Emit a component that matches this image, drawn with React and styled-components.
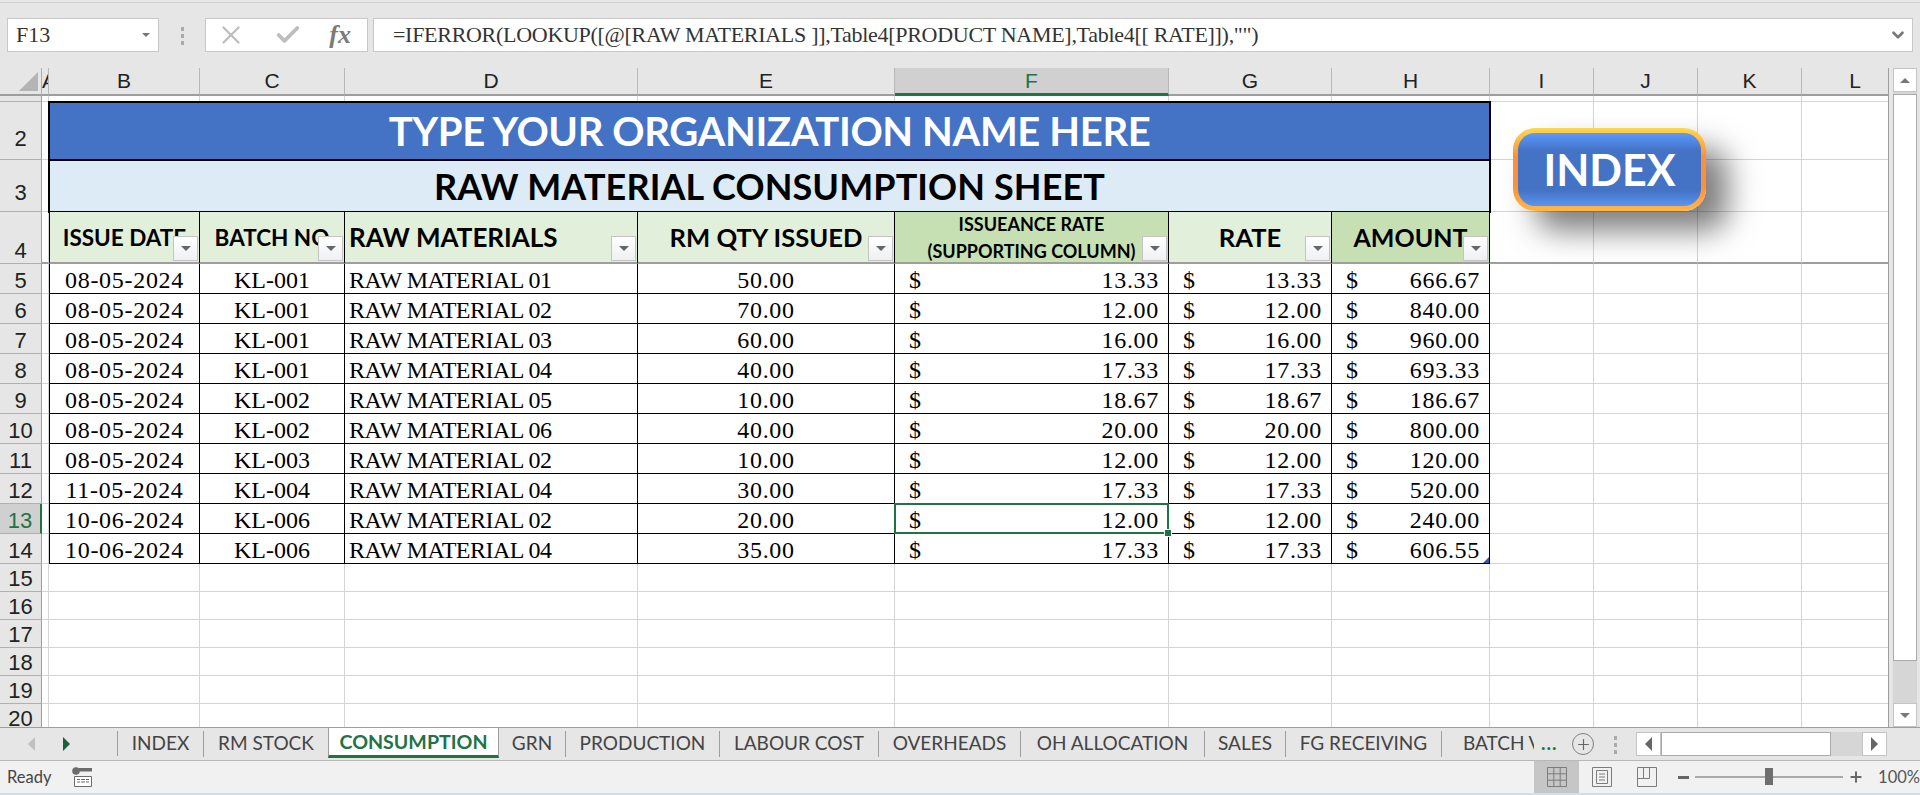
import styled, { createGlobalStyle } from "styled-components";
import { ChevronDown, X, Check, Plus } from "lucide-react";

const calibri = `Lato, "Open Sans", sans-serif`;
const cambria = `"Liberation Serif", serif`;
const arial = `"Liberation Sans", Arial, sans-serif`;

const GRID = "#d4d4d4";
const GREEN = "#217346";

const columns = ["B", "C", "D", "E", "F", "G", "H"];
const emptyColumns = ["I", "J", "K", "L"];

const records = [
  ["08-05-2024", "KL-001", "RAW MATERIAL 01", "50.00", "13.33", "13.33", "666.67"],
  ["08-05-2024", "KL-001", "RAW MATERIAL 02", "70.00", "12.00", "12.00", "840.00"],
  ["08-05-2024", "KL-001", "RAW MATERIAL 03", "60.00", "16.00", "16.00", "960.00"],
  ["08-05-2024", "KL-001", "RAW MATERIAL 04", "40.00", "17.33", "17.33", "693.33"],
  ["08-05-2024", "KL-002", "RAW MATERIAL 05", "10.00", "18.67", "18.67", "186.67"],
  ["08-05-2024", "KL-002", "RAW MATERIAL 06", "40.00", "20.00", "20.00", "800.00"],
  ["08-05-2024", "KL-003", "RAW MATERIAL 02", "10.00", "12.00", "12.00", "120.00"],
  ["11-05-2024", "KL-004", "RAW MATERIAL 04", "30.00", "17.33", "17.33", "520.00"],
  ["10-06-2024", "KL-006", "RAW MATERIAL 02", "20.00", "12.00", "12.00", "240.00"],
  ["10-06-2024", "KL-006", "RAW MATERIAL 04", "35.00", "17.33", "17.33", "606.55"],
];

const tabs = [
  { name: "INDEX", width: 86 },
  { name: "RM STOCK", width: 125 },
  { name: "CONSUMPTION", width: 171, active: true },
  { name: "GRN", width: 67 },
  { name: "PRODUCTION", width: 154 },
  { name: "LABOUR COST", width: 159 },
  { name: "OVERHEADS", width: 142 },
  { name: "OH ALLOCATION", width: 184 },
  { name: "SALES", width: 81 },
  { name: "FG RECEIVING", width: 156 },
];

const GlobalStyle = createGlobalStyle`
  html, body { margin: 0; padding: 0; background: #e6e6e6; overflow: hidden; }
  * { box-sizing: border-box; }
`;

const Page = styled.div`
  width: 1920px;
  height: 795px;
  display: flex;
  flex-direction: column;
  background: #e6e6e6;
  overflow: hidden;
  & > * {
    flex-shrink: 0;
  }
`;

/* formula bar */
const FormulaRow = styled.div`
  height: 66px;
  margin-top: 2px;
  border-top: 1px solid #d0d0d0;
  padding: 15px 7px 0;
  display: flex;
  align-items: flex-start;
`;

const NameBox = styled.div`
  width: 152px;
  height: 34px;
  background: #fff;
  border: 1px solid #c8c8c8;
  display: flex;
  align-items: center;
  justify-content: space-between;
  padding: 0 8px;
  font: 22px ${cambria};
  color: #333;
`;

const Grip = styled.div`
  width: 46px;
  display: flex;
  flex-direction: column;
  align-items: center;
  gap: 3px;
  padding-top: 9px;
  flex-shrink: 0;
  span {
    width: 3px;
    height: 4px;
    background: #aaa;
  }
`;

const FxBox = styled.div`
  width: 163px;
  height: 34px;
  background: #fff;
  border: 1px solid #c8c8c8;
  display: flex;
  align-items: center;
  justify-content: space-between;
  padding: 0 16px 0 10px;
  color: #bdbdbd;
`;

const FxMark = styled.span`
  font: italic 700 26px ${cambria};
  color: #7a7a7a;
`;

const FormulaInput = styled.div`
  margin-left: 5px;
  flex: 1;
  height: 34px;
  background: #fff;
  border: 1px solid #c8c8c8;
  display: flex;
  align-items: center;
  justify-content: space-between;
  padding: 0 5px 0 19px;
  font: 22px ${cambria};
  letter-spacing: -0.29px;
  color: #333;
  white-space: pre;
`;

const Arrow = styled.span`
  width: 0;
  height: 0;
  flex-shrink: 0;
  border-style: solid;
  border-color: transparent;
  border-width: ${(p) => p.$size || 5}px;
  ${(p) => p.$dir === "up" && `border-top-width: 0; border-bottom-color: ${p.$color || "#777"};`}
  ${(p) => p.$dir === "down" && `border-bottom-width: 0; border-top-color: ${p.$color || "#777"};`}
  ${(p) => p.$dir === "left" && `border-left-width: 0; border-right-color: ${p.$color || "#777"};`}
  ${(p) => p.$dir === "right" && `border-right-width: 0; border-left-color: ${p.$color || "#777"};`}
`;

/* sheet */
const Main = styled.div`
  height: 659px;
  display: flex;
  position: relative;
`;

const Sheet = styled.div`
  width: 1889px;
  height: 659px;
  display: grid;
  grid-template-columns: 42px 7px 151px 145px 293px 257px 274px 163px 158px 104px 104px 104px 87px;
  grid-template-rows: 28px 6px 58px 52px 52px repeat(10, 30px) repeat(6, 28px);
  background: #fff;
  border-right: 1px solid #9e9e9e;
  overflow: hidden;
`;

const Corner = styled.div`
  background: #e6e6e6;
  border-right: 1px solid #b0b0b0;
  border-bottom: 2px solid #9e9e9e;
  display: flex;
  align-items: flex-end;
  justify-content: flex-end;
  padding: 0 3px 3px 0;
`;

const CornerMark = styled.div`
  width: 19px;
  height: 19px;
  background: #b4b4b4;
  clip-path: polygon(100% 0, 100% 100%, 0 100%);
`;

const ColHead = styled.div`
  background: ${(p) => (p.$selected ? "#d0d0d0" : "#e6e6e6")};
  color: ${(p) => (p.$selected ? GREEN : "#222")};
  border-right: 1px solid #b8b8b8;
  border-bottom: ${(p) => (p.$selected ? `3px solid ${GREEN}` : "2px solid #9e9e9e")};
  font: 21px/25px ${arial};
  display: flex;
  justify-content: ${(p) => (p.$narrow ? "flex-start" : "center")};
  padding-left: ${(p) => p.$shift || 0}px;
  overflow: hidden;
`;

const RowHead = styled.div`
  background: ${(p) => (p.$selected ? "#d0d0d0" : "#e6e6e6")};
  color: ${(p) => (p.$selected ? GREEN : "#222")};
  border-right: ${(p) => (p.$selected ? `2px solid ${GREEN}` : "1px solid #9e9e9e")};
  border-bottom: 1px solid #b0b0b0;
  font: 22px/22px ${arial};
  display: flex;
  align-items: flex-end;
  justify-content: center;
  padding-bottom: ${(p) => p.$pad || 1}px;
  overflow: hidden;
`;

const Blank = styled.div`
  background: #fff;
  border-right: 1px solid ${GRID};
  border-bottom: ${(p) => (p.$freeze ? "2px solid #9e9e9e" : `1px solid ${GRID}`)};
`;

const TitleBand = styled.div`
  grid-column: span 7;
  margin: -1px;
  position: relative;
  background: ${(p) => (p.$light ? "#ddebf7" : "#4472c4")};
  color: ${(p) => (p.$light ? "#000" : "#fff")};
  border: 2px solid #000;
  font: 700 ${(p) => (p.$light ? 36 : 40)}px ${calibri};
  letter-spacing: ${(p) => (p.$light ? 0.1 : -0.38)}px;
  display: flex;
  align-items: center;
  justify-content: center;
  white-space: nowrap;
`;

const HeadCell = styled.div`
  position: relative;
  background: ${(p) => (p.$dark ? "#c6e0b4" : "#e2efda")};
  border-right: 1px solid #000;
  border-left: ${(p) => (p.$first ? "1px solid #000" : "none")};
  border-bottom: 2px solid #9e9e9e;
  font: 700 ${(p) => p.$size}px/27px ${calibri};
  color: #000;
  display: flex;
  align-items: center;
  justify-content: ${(p) => (p.$left ? "flex-start" : "center")};
  padding: 1px 0 0 ${(p) => (p.$left ? 4 : 0)}px;
  text-align: center;
  white-space: pre-line;
  overflow: hidden;
`;

const FilterButton = styled.div`
  position: absolute;
  right: 1px;
  bottom: 1px;
  width: 25px;
  height: 25px;
  background: linear-gradient(#ffffff, #eef0f3);
  border: 1px solid #c4c4c4;
  display: flex;
  align-items: center;
  justify-content: center;
`;

const DataCell = styled.div`
  position: relative;
  background: #fff;
  border-right: 1px solid #000;
  border-left: ${(p) => (p.$first ? "1px solid #000" : "none")};
  border-bottom: 1px solid #000;
  font: 24px/1 ${cambria};
  letter-spacing: ${(p) => p.$spacing ?? 0.7}px;
  color: #000;
  display: flex;
  align-items: center;
  justify-content: ${(p) => p.$justify || "center"};
  padding: ${(p) => (p.$money ? "2px 9px 0 14px" : p.$left ? "2px 0 0 4px" : "2px 0 0")};
  white-space: nowrap;
`;

const SelectionBox = styled.div`
  position: absolute;
  inset: -1px;
  border: 2px solid ${GREEN};
  pointer-events: none;
`;

const FillHandle = styled.div`
  position: absolute;
  right: -5px;
  bottom: -5px;
  width: 8px;
  height: 8px;
  background: ${GREEN};
  border: 1px solid #fff;
  z-index: 2;
`;

const ResizeCorner = styled.div`
  position: absolute;
  right: 0;
  bottom: 0;
  width: 6px;
  height: 6px;
  background: #3f51b5;
  clip-path: polygon(100% 0, 100% 100%, 0 100%);
`;

const IndexButton = styled.div`
  position: absolute;
  left: 1513px;
  top: 60px;
  width: 193px;
  height: 83px;
  border: 5px solid transparent;
  border-radius: 22px;
  background: linear-gradient(#5a9bff 0%, #4472c4 24%, #4472c4 78%, #5a94f0 100%) padding-box,
    linear-gradient(#ffd84f 0%, #fb8f3c 35%, #fb8f3c 70%, #ffb84a 100%) border-box;
  box-shadow: 22px 20px 30px rgba(0, 0, 0, 0.5);
  color: #fff;
  font: 700 43px ${calibri};
  display: flex;
  align-items: center;
  justify-content: center;
`;

/* vertical scrollbar */
const VScroll = styled.div`
  margin-left: 4px;
  width: 24px;
  height: 659px;
  display: flex;
  flex-direction: column;
  background: #d6d6d6;
`;

const ScrollButton = styled.div`
  width: ${(p) => p.$w || 24}px;
  height: 24px;
  background: #fff;
  border: 1px solid #c4c4c4;
  display: flex;
  align-items: center;
  justify-content: center;
  flex-shrink: 0;
`;

const VThumb = styled.div`
  margin-top: 2px;
  height: 567px;
  background: #fff;
  border: 1px solid #ababab;
`;

const VTrack = styled.div`
  flex: 1;
`;

/* tabs */
const TabBar = styled.div`
  height: 34px;
  border-top: 1px solid #9e9e9e;
  border-bottom: 1px solid #b8b8b8;
  display: flex;
  align-items: stretch;
  background: #e6e6e6;
`;

const TabNav = styled.div`
  width: 118px;
  display: flex;
  align-items: center;
  gap: 28px;
  padding-left: 28px;
  border-right: 1px solid #9e9e9e;
  margin: 3px 0 4px;
`;

const Tab = styled.div`
  width: ${(p) => p.$w}px;
  flex-shrink: 0;
  overflow: hidden;
  display: flex;
  align-items: center;
  justify-content: ${(p) => (p.$clip ? "flex-start" : "center")};
  padding-left: ${(p) => (p.$clip ? 21 : 0)}px;
  white-space: nowrap;
  font: ${(p) => (p.$active ? 700 : 400)} ${(p) => (p.$active ? 19.6 : 19)}px ${calibri};
  color: ${(p) => (p.$active ? GREEN : "#444")};
  background: ${(p) => (p.$active ? "#fff" : "transparent")};
  ${(p) =>
    p.$active
      ? `margin: -1px 0 2px -1px; border: solid #9e9e9e; border-width: 1px 1px 0 1px; border-bottom: 3px solid ${GREEN};`
      : `margin: 3px 0 3px; padding-bottom: 3px; border-right: ${p.$clip ? "none" : "1px solid #9e9e9e"};`}
`;

const MoreTabs = styled.div`
  width: 38px;
  padding: 0 0 3px 7px;
  display: flex;
  align-items: center;
  font: 700 19px ${calibri};
  color: ${GREEN};
  letter-spacing: 1px;
`;

const AddSheet = styled.div`
  width: 22px;
  height: 22px;
  margin: 5px 0 0 0;
  border: 1px solid #808080;
  border-radius: 50%;
  color: #666;
  display: flex;
  align-items: center;
  justify-content: center;
`;

const BarGrip = styled(Grip)`
  width: 42px;
  padding-top: 8px;
`;

const HScroll = styled.div`
  width: 251px;
  height: 24px;
  margin-top: 4px;
  display: flex;
  background: #d6d6d6;
`;

const HThumb = styled.div`
  width: 170px;
  background: #fff;
  border: 1px solid #ababab;
`;

const HTrack = styled.div`
  flex: 1;
`;

/* status */
const StatusBar = styled.div`
  height: 32px;
  background: #f1f1f1;
  display: flex;
  align-items: center;
  padding-left: 7px;
  font: 16.5px ${calibri};
  color: #444;
`;

const BottomEdge = styled.div`
  height: 2px;
  background: #cfe0e8;
`;

const StatusLeft = styled.div`
  width: 1529px;
  display: flex;
  align-items: center;
  gap: 21px;
`;

const ViewButton = styled.div`
  width: 45px;
  height: 32px;
  background: ${(p) => (p.$active ? "#c6c6c6" : "transparent")};
  display: flex;
  align-items: center;
  justify-content: center;
`;

const Zoom = styled.div`
  display: flex;
  align-items: center;
  margin-left: 9px;
  color: #666;
`;

const ZoomMinus = styled.div`
  width: 11px;
  height: 3px;
  background: #666;
`;

const ZoomTrack = styled.div`
  width: 148px;
  height: 2px;
  margin: 0 5px 0 6px;
  background: #a8a8a8;
  position: relative;
`;

const ZoomThumb = styled.div`
  position: absolute;
  left: 70px;
  top: -8px;
  width: 8px;
  height: 17px;
  background: #6e6e6e;
`;

const ZoomValue = styled.div`
  margin-left: 14px;
  font: 16.5px ${calibri};
  color: #555;
`;

const headers = [
  { text: "ISSUE DATE", size: 22.5, first: true },
  { text: "BATCH NO", size: 22.5 },
  { text: "RAW MATERIALS", left: true, size: 26 },
  { text: "RM QTY ISSUED", size: 25.6 },
  { text: "ISSUEANCE RATE\n(SUPPORTING COLUMN)", size: 18, dark: true },
  { text: "RATE", size: 25.6 },
  { text: "AMOUNT", size: 25, dark: true },
];

const GridIcon = () => (
  <svg width="20" height="20" viewBox="0 0 20 20" fill="none" stroke="#7c7c7c" strokeWidth="1">
    <path d="M.5.5h19v19H.5zM.5 6.8h19M.5 13.2h19M6.8.5v19M13.2.5v19" />
  </svg>
);

const PageIcon = () => (
  <svg width="20" height="20" viewBox="0 0 20 20" fill="none" stroke="#7c7c7c" strokeWidth="1">
    <path d="M.5.5h19v19H.5zM4.5 3.5h11v13h-11zM7 7h6M7 10h6M7 13h6" />
  </svg>
);

const BreakIcon = () => (
  <svg width="20" height="20" viewBox="0 0 20 20" fill="none" stroke="#7c7c7c" strokeWidth="1">
    <path d="M.5.5h19v19H.5zM.5 11.5h12M6.5.5v11M12.5.5v11" />
  </svg>
);

const MacroIcon = () => (
  <svg width="20" height="20" viewBox="0 0 20 20">
    <circle cx="4" cy="4" r="3.8" fill="#6c6c6c" />
    <path d="M7 1h13v3.5H7z" fill="#6c6c6c" />
    <path d="M2.5 9.5h17v10h-17z" fill="#fff" stroke="#6c6c6c" />
    <path d="M5 12.5h3M9 12.5h4M14 12.5h3M5 15h3M9 15h4M14 15h3" stroke="#6c6c6c" />
  </svg>
);

const App = () => {
  const renderRowCells = (record, index) => {
    const rowNumber = index + 5;
    const selected = rowNumber === 13;
    return [
      <RowHead key={`h${rowNumber}`} $selected={selected}>{rowNumber}</RowHead>,
      <Blank key={`a${rowNumber}`} />,
      <DataCell key={`b${rowNumber}`} $first>{record[0]}</DataCell>,
      <DataCell key={`c${rowNumber}`} $spacing={0}>{record[1]}</DataCell>,
      <DataCell key={`d${rowNumber}`} $left $spacing={-0.5} $justify="flex-start">{record[2]}</DataCell>,
      <DataCell key={`e${rowNumber}`}>{record[3]}</DataCell>,
      <DataCell key={`f${rowNumber}`} $money $justify="space-between">
        <span>$</span>
        <span>{record[4]}</span>
        {selected && (
          <SelectionBox>
            <FillHandle />
          </SelectionBox>
        )}
      </DataCell>,
      <DataCell key={`g${rowNumber}`} $money $justify="space-between">
        <span>$</span>
        <span>{record[5]}</span>
      </DataCell>,
      <DataCell key={`i${rowNumber}`} $money $justify="space-between">
        <span>$</span>
        <span>{record[6]}</span>
        {rowNumber === 14 && <ResizeCorner />}
      </DataCell>,
      ...emptyColumns.map((c) => <Blank key={`${c}${rowNumber}`} />),
    ];
  };

  const renderEmptyRow = (rowNumber) => [
    <RowHead key={`h${rowNumber}`}>{rowNumber}</RowHead>,
    ...["A", ...columns, ...emptyColumns].map((c) => <Blank key={`${c}${rowNumber}`} />),
  ];

  return (
    <Page>
      <GlobalStyle />
      <FormulaRow>
        <NameBox>
          F13
          <Arrow $dir="down" $size={4} />
        </NameBox>
        <Grip>
          <span />
          <span />
          <span />
        </Grip>
        <FxBox>
          <X size={30} strokeWidth={1.8} />
          <Check size={28} strokeWidth={3.2} />
          <FxMark>fx</FxMark>
        </FxBox>
        <FormulaInput>
          {`=IFERROR(LOOKUP([@[RAW MATERIALS ]],Table4[PRODUCT NAME],Table4[[ RATE]]),"")`}
          <ChevronDown size={18} strokeWidth={3.5} color="#777" />
        </FormulaInput>
      </FormulaRow>

      <Main>
        <Sheet>
          <Corner>
            <CornerMark />
          </Corner>
          <ColHead $narrow>A</ColHead>
          {columns.map((c) => (
            <ColHead key={c} $selected={c === "F"}>{c}</ColHead>
          ))}
          {emptyColumns.map((c) => (
            <ColHead key={c} $shift={c === "L" ? 20 : 0}>{c}</ColHead>
          ))}

          <RowHead />
          {["A", ...columns, ...emptyColumns].map((c) => (
            <Blank key={`${c}1`} />
          ))}

          <RowHead $pad={9}>2</RowHead>
          <Blank />
          <TitleBand>TYPE YOUR ORGANIZATION NAME HERE</TitleBand>
          {emptyColumns.map((c) => (
            <Blank key={`${c}2`} />
          ))}

          <RowHead $pad={7}>3</RowHead>
          <Blank />
          <TitleBand $light>RAW MATERIAL CONSUMPTION SHEET</TitleBand>
          {emptyColumns.map((c) => (
            <Blank key={`${c}3`} />
          ))}

          <RowHead>4</RowHead>
          <Blank $freeze />
          {headers.map((h) => (
            <HeadCell key={h.text} $size={h.size} $first={h.first} $dark={h.dark} $left={h.left}>
              {h.text}
              <FilterButton>
                <Arrow $dir="down" $size={5} $color="#666" />
              </FilterButton>
            </HeadCell>
          ))}
          {emptyColumns.map((c) => (
            <Blank key={`${c}4`} $freeze />
          ))}

          {records.map(renderRowCells)}
          {[15, 16, 17, 18, 19, 20].map(renderEmptyRow)}
        </Sheet>

        <VScroll>
          <ScrollButton>
            <Arrow $dir="up" $size={5} />
          </ScrollButton>
          <VThumb />
          <VTrack />
          <ScrollButton>
            <Arrow $dir="down" $size={5} />
          </ScrollButton>
        </VScroll>

        <IndexButton>INDEX</IndexButton>
      </Main>

      <TabBar>
        <TabNav>
          <Arrow $dir="left" $size={7} $color="#c0c0c0" />
          <Arrow $dir="right" $size={7} $color="#17603a" />
        </TabNav>
        {tabs.map((t) => (
          <Tab key={t.name} $w={t.width} $active={t.active}>
            {t.name}
          </Tab>
        ))}
        <Tab $clip $w={92}>BATCH VARIANCE</Tab>
        <MoreTabs>...</MoreTabs>
        <AddSheet>
          <Plus size={17} strokeWidth={1.6} />
        </AddSheet>
        <BarGrip>
          <span />
          <span />
          <span />
        </BarGrip>
        <HScroll>
          <ScrollButton $w={25}>
            <Arrow $dir="left" $size={7} $color="#666" />
          </ScrollButton>
          <HThumb />
          <HTrack />
          <ScrollButton $w={25}>
            <Arrow $dir="right" $size={7} $color="#666" />
          </ScrollButton>
        </HScroll>
      </TabBar>

      <StatusBar>
        <StatusLeft>
          Ready
          <MacroIcon />
        </StatusLeft>
        <ViewButton $active>
          <GridIcon />
        </ViewButton>
        <ViewButton>
          <PageIcon />
        </ViewButton>
        <ViewButton>
          <BreakIcon />
        </ViewButton>
        <Zoom>
          <ZoomMinus />
          <ZoomTrack>
            <ZoomThumb />
          </ZoomTrack>
          <Plus size={16} strokeWidth={3} />
        </Zoom>
        <ZoomValue>100%</ZoomValue>
      </StatusBar>
      <BottomEdge />
    </Page>
  );
};

export default App;
